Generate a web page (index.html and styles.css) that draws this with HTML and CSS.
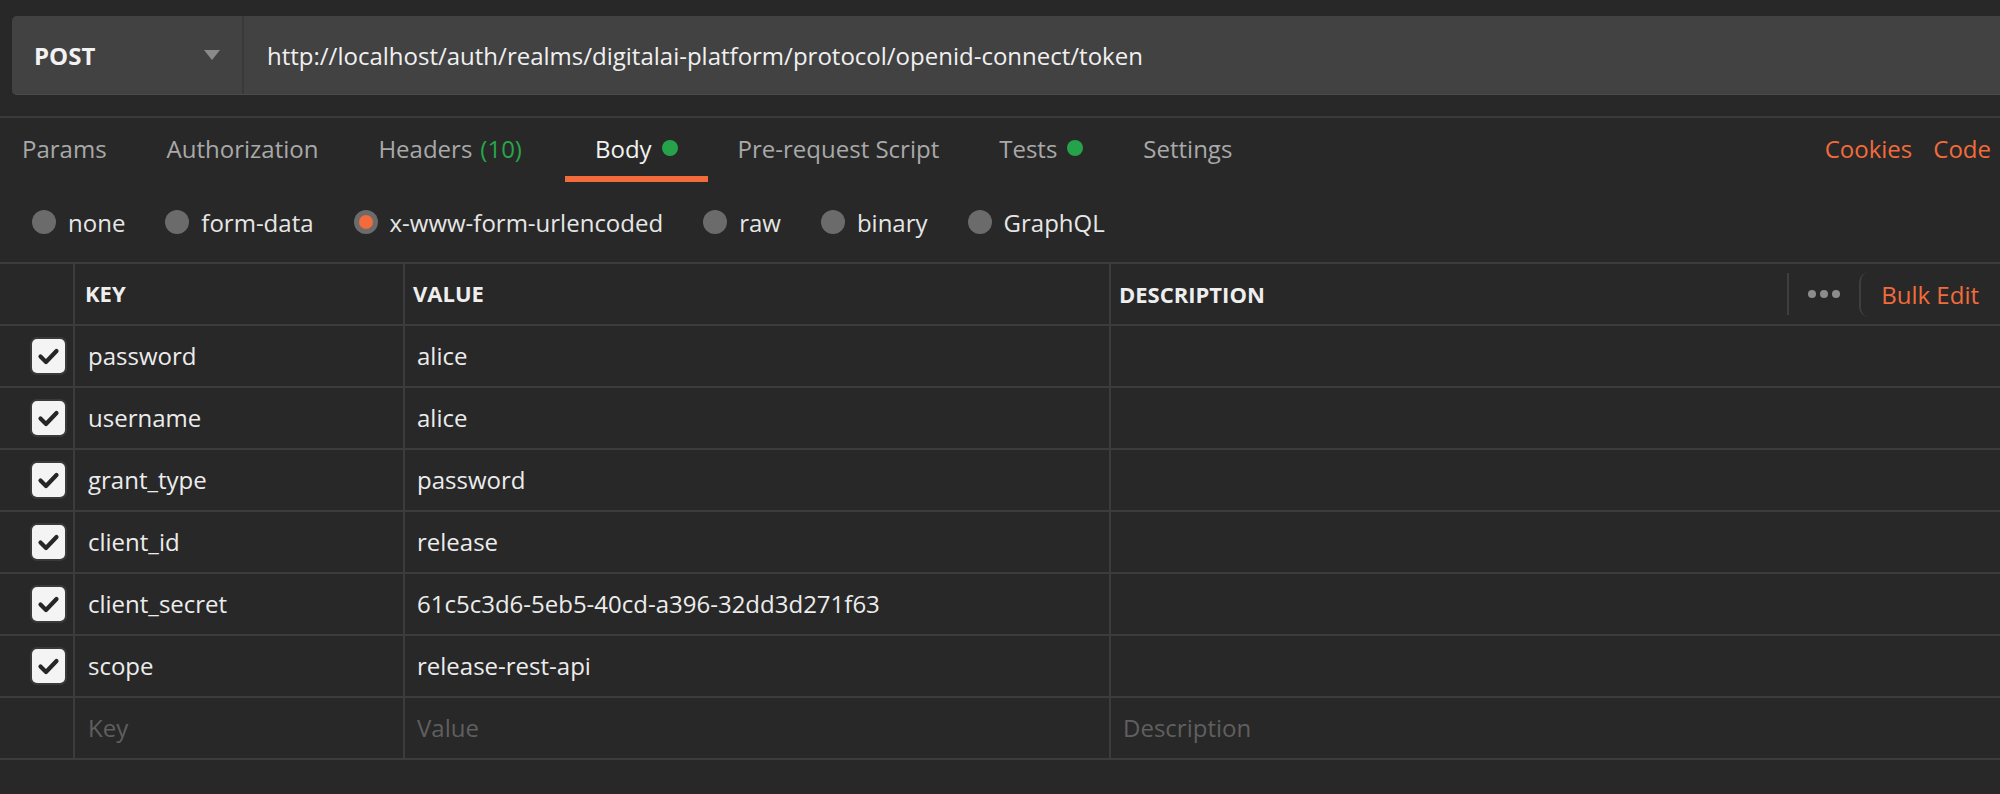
FILE: index.html
```html
<!DOCTYPE html>
<html lang="en">
<head>
<meta charset="utf-8">
<title>Request</title>
<link rel="stylesheet" href="styles.css">
</head>
<body>
<div class="request">
  <div class="url-bar">
    <div class="method">
      <span class="method-name">POST</span>
      <svg class="caret" width="16" height="10" viewBox="0 0 16 10"><path d="M0 0 H16 L8 10 Z" fill="#8a8a8a"/></svg>
    </div>
    <div class="url">http://localhost/auth/realms/digitalai-platform/protocol/openid-connect/token</div>
  </div>
</div>

<div class="tabs-row">
  <nav class="tabs">
    <div class="tab tab-first">Params</div>
    <div class="tab">Authorization</div>
    <div class="tab tab-headers">Headers <span class="count">(10)</span></div>
    <div class="tab tab-active">Body<span class="status"></span></div>
    <div class="tab">Pre-request Script</div>
    <div class="tab">Tests<span class="status"></span></div>
    <div class="tab">Settings</div>
  </nav>
  <div class="links">
    <span class="link">Cookies</span>
    <span class="link">Code</span>
  </div>
</div>

<div class="body-types">
  <div class="radio"><span class="radio-dot"></span>none</div>
  <div class="radio"><span class="radio-dot"></span>form-data</div>
  <div class="radio"><span class="radio-dot radio-on"></span>x-www-form-urlencoded</div>
  <div class="radio"><span class="radio-dot"></span>raw</div>
  <div class="radio"><span class="radio-dot"></span>binary</div>
  <div class="radio"><span class="radio-dot"></span>GraphQL</div>
</div>

<div class="kv-table">
  <div class="kv-row kv-head">
    <div class="cell cell-check"></div>
    <div class="cell cell-key">KEY</div>
    <div class="cell cell-value">VALUE</div>
    <div class="cell cell-desc">
      <span>DESCRIPTION</span>
      <div class="head-actions">
        <span class="sep"></span>
        <span class="more"><i></i><i></i><i></i></span>
        <span class="bulk">Bulk Edit</span>
      </div>
    </div>
  </div>

  <div class="kv-row">
    <div class="cell cell-check"><span class="checkbox"><svg width="33" height="34" viewBox="0 0 33 34"><path d="M8.5 17.5 L14 23 L24.5 12" fill="none" stroke="#262626" stroke-width="4.2" stroke-linecap="round" stroke-linejoin="round"/></svg></span></div>
    <div class="cell cell-key">password</div>
    <div class="cell cell-value">alice</div>
    <div class="cell cell-desc"></div>
  </div>
  <div class="kv-row">
    <div class="cell cell-check"><span class="checkbox"><svg width="33" height="34" viewBox="0 0 33 34"><path d="M8.5 17.5 L14 23 L24.5 12" fill="none" stroke="#262626" stroke-width="4.2" stroke-linecap="round" stroke-linejoin="round"/></svg></span></div>
    <div class="cell cell-key">username</div>
    <div class="cell cell-value">alice</div>
    <div class="cell cell-desc"></div>
  </div>
  <div class="kv-row">
    <div class="cell cell-check"><span class="checkbox"><svg width="33" height="34" viewBox="0 0 33 34"><path d="M8.5 17.5 L14 23 L24.5 12" fill="none" stroke="#262626" stroke-width="4.2" stroke-linecap="round" stroke-linejoin="round"/></svg></span></div>
    <div class="cell cell-key">grant_type</div>
    <div class="cell cell-value">password</div>
    <div class="cell cell-desc"></div>
  </div>
  <div class="kv-row">
    <div class="cell cell-check"><span class="checkbox"><svg width="33" height="34" viewBox="0 0 33 34"><path d="M8.5 17.5 L14 23 L24.5 12" fill="none" stroke="#262626" stroke-width="4.2" stroke-linecap="round" stroke-linejoin="round"/></svg></span></div>
    <div class="cell cell-key">client_id</div>
    <div class="cell cell-value">release</div>
    <div class="cell cell-desc"></div>
  </div>
  <div class="kv-row">
    <div class="cell cell-check"><span class="checkbox"><svg width="33" height="34" viewBox="0 0 33 34"><path d="M8.5 17.5 L14 23 L24.5 12" fill="none" stroke="#262626" stroke-width="4.2" stroke-linecap="round" stroke-linejoin="round"/></svg></span></div>
    <div class="cell cell-key">client_secret</div>
    <div class="cell cell-value">61c5c3d6-5eb5-40cd-a396-32dd3d271f63</div>
    <div class="cell cell-desc"></div>
  </div>
  <div class="kv-row">
    <div class="cell cell-check"><span class="checkbox"><svg width="33" height="34" viewBox="0 0 33 34"><path d="M8.5 17.5 L14 23 L24.5 12" fill="none" stroke="#262626" stroke-width="4.2" stroke-linecap="round" stroke-linejoin="round"/></svg></span></div>
    <div class="cell cell-key">scope</div>
    <div class="cell cell-value">release-rest-api</div>
    <div class="cell cell-desc"></div>
  </div>
  <div class="kv-row">
    <div class="cell cell-check"></div>
    <div class="cell cell-key placeholder">Key</div>
    <div class="cell cell-value placeholder">Value</div>
    <div class="cell cell-desc placeholder">Description</div>
  </div>
</div>
</body>
</html>
```

FILE: styles.css
```css
* { box-sizing: border-box; }

html, body {
  margin: 0;
  padding: 0;
  background: #282828;
  overflow: hidden;
}

body {
  font-family: "Open Sans", "Liberation Sans", sans-serif;
  font-size: 24px;
  color: #ececec;
  width: 2000px;
  height: 794px;
}

/* request bar */
.request {
  padding: 16px 0 21px 12px;
  border-bottom: 2px solid #3a3a3a;
}

.url-bar {
  display: flex;
  height: 79px;
  background: #424242;
  border-radius: 5px 0 0 5px;
  border-bottom: 1px solid #4a4a4a;
}

.method {
  width: 232px;
  flex: none;
  display: flex;
  align-items: center;
  justify-content: space-between;
  padding: 0 22px 0 22px;
  border-right: 2px solid #393939;
}

.method-name {
  font-weight: 700;
  color: #f2f2f2;
}

.caret { display: block; }

.url {
  display: flex;
  align-items: center;
  padding-left: 23px;
  color: #f0f0f0;
  white-space: nowrap;
}

/* tabs */
.tabs-row {
  display: flex;
  align-items: stretch;
  justify-content: space-between;
  height: 64px;
}

.tabs {
  display: flex;
  align-items: stretch;
}

.tab {
  display: flex;
  align-items: center;
  padding: 2px 30px 0 30px;
  color: #a9a9a9;
  border-bottom: 6px solid transparent;
  white-space: nowrap;
}

.tab-first { padding-left: 22px; }
.tab-headers { padding-right: 43px; }

.count {
  color: #27a649;
  margin-left: 8px;
}

.tab-active {
  color: #f2f2f2;
  border-bottom-color: #f26b3a;
}

.status {
  width: 16px;
  height: 16px;
  border-radius: 50%;
  background: #26a34a;
  margin-left: 10px;
  flex: none;
}

.links {
  display: flex;
  align-items: center;
  gap: 21px;
  padding: 2px 9px 6px 0;
}

.link { color: #f26b3a; }

/* body type radios */
.body-types {
  display: flex;
  align-items: center;
  height: 80px;
  padding-left: 32px;
}

.radio {
  display: flex;
  align-items: center;
  margin-right: 40px;
  color: #e6e6e6;
  white-space: nowrap;
}

.radio-dot {
  width: 24px;
  height: 24px;
  border-radius: 50%;
  background: #6b6b6b;
  margin-right: 12px;
  flex: none;
  display: flex;
  align-items: center;
  justify-content: center;
}

.radio-on::after {
  content: "";
  width: 14px;
  height: 14px;
  border-radius: 50%;
  background: #f26b3a;
}

/* key-value table */
.kv-table {
  border-top: 2px solid #3c3c3c;
}

.kv-row {
  display: grid;
  grid-template-columns: 73px 330px 706px 1fr;
  height: 62px;
  border-bottom: 2px solid #3c3c3c;
}

.cell {
  display: flex;
  align-items: center;
  white-space: nowrap;
  min-width: 0;
  padding-bottom: 2px;
}

.cell + .cell { border-left: 2px solid #3c3c3c; }

.cell-check {
  justify-content: flex-end;
  padding-right: 8px;
  padding-bottom: 0;
}

.cell-key { padding-left: 13px; }
.cell-value { padding-left: 12px; }
.cell-desc { padding-left: 12px; }

.kv-head .cell {
  font-size: 22px;
  font-weight: 700;
  color: #eeeeee;
}

.kv-head .cell-key { padding-left: 10px; }
.kv-head .cell-value { padding-left: 8px; }
.kv-head .cell-desc { padding-left: 8px; padding-bottom: 0; }

.head-actions {
  margin-left: auto;
  display: flex;
  align-items: center;
  height: 100%;
  padding-right: 21px;
}

.sep {
  width: 2px;
  height: 42px;
  background: #3e3e3e;
  margin-right: 19px;
}

.more {
  display: flex;
  gap: 4px;
  margin-right: 19px;
}

.more i {
  width: 8px;
  height: 8px;
  border-radius: 50%;
  background: #8c8c8c;
}

.bulk {
  font-size: 24px;
  font-weight: 400;
  color: #f26b3a;
  border-left: 2px solid #3e3e3e;
  border-radius: 10px 0 0 10px;
  padding: 6px 0 6px 20px;
}

.kv-head .bulk { font-weight: 400; color: #f26b3a; }

.checkbox {
  width: 33px;
  height: 34px;
  border-radius: 5px;
  background: #f4f4f4;
  box-shadow: 0 0 0 2px #3a3a3a;
  display: block;
}

.checkbox svg { display: block; }

.placeholder { color: #5f5f5f; }
```
